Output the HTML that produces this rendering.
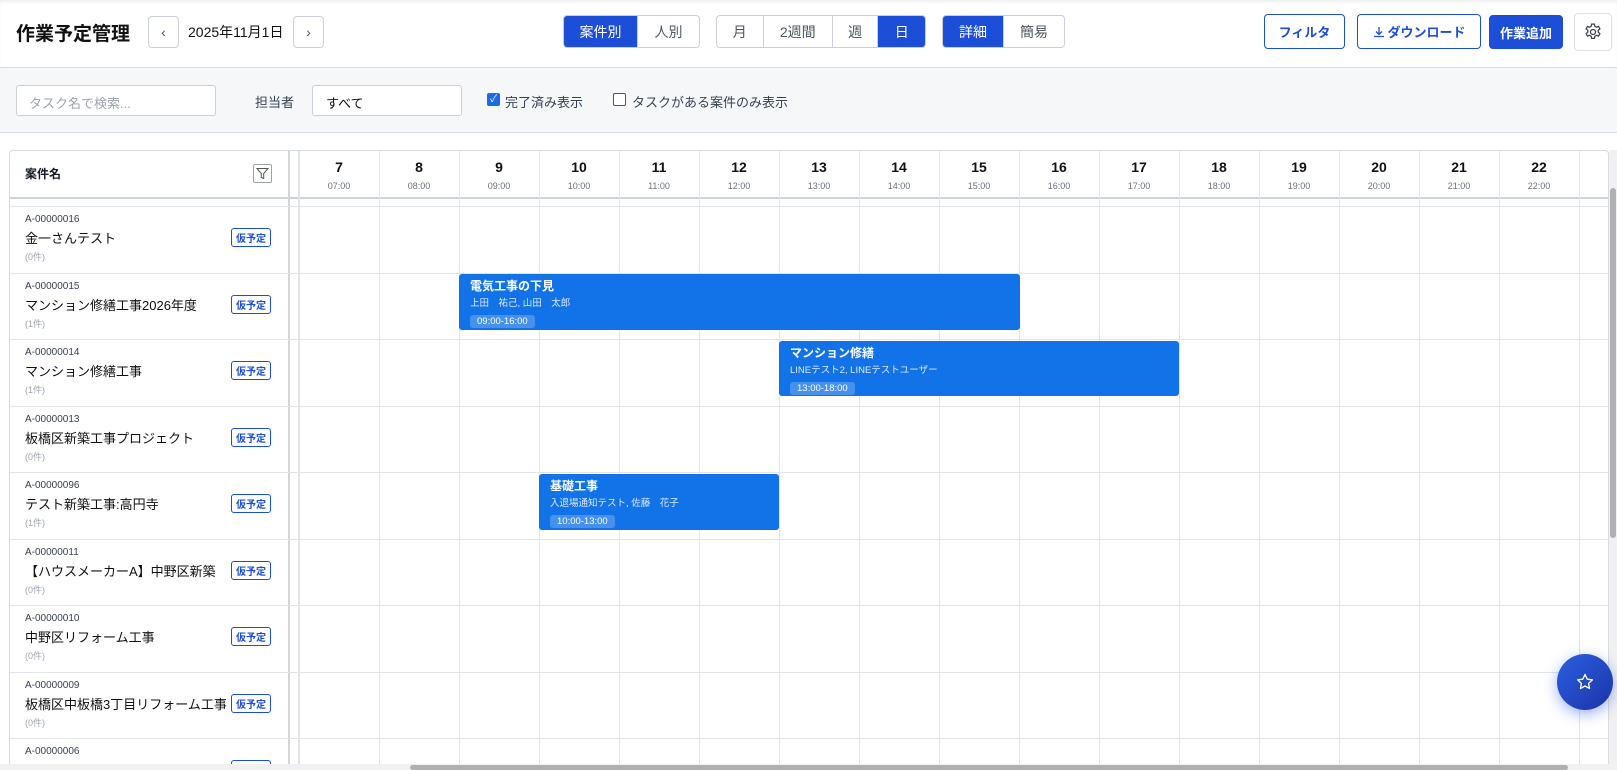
<!DOCTYPE html>
<html><head><meta charset="utf-8"><style>
*{box-sizing:border-box;margin:0;padding:0}
body{width:1617px;height:770px;overflow:hidden;background:#fff;font-family:"Liberation Sans","Noto Sans CJK JP",sans-serif;color:#111827;position:relative}
.abs{position:absolute}
.hdr{left:0;top:0;width:1617px;height:68px;border-bottom:1px solid #d7dbe2;background:#fff;box-shadow:inset 0 3px 4px -2px #e5e7eb}
.btn{position:absolute;border:1px solid #cbd0d8;border-radius:4px;background:#fff;display:flex;align-items:center;justify-content:center;font-size:14px;color:#4b5563}
.grp{position:absolute;top:15px;height:33px;border:1px solid #cbd0d8;border-radius:4px;display:flex;overflow:hidden;background:#fff}
.grp div{display:flex;align-items:center;justify-content:center;font-size:14px;color:#4b5563;border-right:1px solid #cbd0d8}
.grp div:last-child{border-right:none}
.grp .on{background:#1d4ed8;color:#fff}
.bar{left:0;top:68px;width:1617px;height:65px;background:#f6f7f9;border-bottom:1px solid #d7dbe2}
.tbl{left:9px;top:150px;width:1600px;height:620px;border:1px solid #d7dbe2;border-radius:4px 4px 0 0;overflow:hidden;background:#fff}
.vl{position:absolute;top:0;width:1px;background:#e2e4e9;height:620px}
.hl{position:absolute;left:0;height:1px;background:#e2e4e9;width:1600px}
.hc{position:absolute;top:0;width:80px;height:47px;text-align:center}
.hc b{display:block;font-size:14px;margin-top:8px;color:#111}
.hc span{display:block;font-size:9px;color:#6b7280;margin-top:6px}
.row{position:absolute;left:0;width:279px}
.row .id{position:absolute;left:15px;top:8px;font-size:10px;color:#374151}
.row .nm{position:absolute;left:15px;top:22px;font-size:13px;color:#111}
.row .ct{position:absolute;left:15px;top:44px;font-size:9px;color:#9ca3af}
.row .bd{position:absolute;left:221px;top:22px;width:40px;height:19px;border:1px solid #1d4ed8;border-radius:3px;font-size:10px;color:#1d4ed8;font-weight:bold;display:flex;align-items:center;justify-content:center}
.ev{position:absolute;background:#1273e8;border-radius:3px;color:#fff;padding:5px 11px 0;line-height:1.2}
.ev .t{font-size:12px;font-weight:bold}
.ev .p{font-size:9.5px;margin-top:5px;color:#dbe8ff}
.ev .tm{display:inline-block;font-size:9.5px;background:rgba(255,255,255,.22);border-radius:3px;padding:1px 7px;margin-top:-1px}
</style></head><body>
<div class="abs hdr"></div>
<div class="abs" style="left:16px;top:19px;font-size:19px;font-weight:bold;color:#111">作業予定管理</div>
<div class="btn" style="left:148px;top:16px;width:31px;height:32px">‹</div>
<div class="abs" style="left:188px;top:22px;font-size:14px;color:#111">2025年11月1日</div>
<div class="btn" style="left:293px;top:16px;width:31px;height:32px">›</div>
<div class="grp" style="left:563px;width:137px"><div class="on" style="width:75px">案件別</div><div style="width:62px">人別</div></div>
<div class="grp" style="left:716px;width:210px"><div style="width:47px">月</div><div style="width:70px">2週間</div><div style="width:46px">週</div><div class="on" style="width:47px">日</div></div>
<div class="grp" style="left:942px;width:123px"><div class="on" style="width:62px">詳細</div><div style="width:61px">簡易</div></div>
<div class="btn" style="left:1264px;top:14px;width:81px;height:35px;border-color:#1d4ed8;color:#1d4ed8;font-weight:bold;font-size:13px">フィルタ</div>
<div class="btn" style="left:1357px;top:14px;width:124px;height:35px;border-color:#1d4ed8;color:#1d4ed8;font-weight:bold;font-size:13px"><svg width="14" height="14" viewBox="0 0 14 14" style="margin-right:1px"><path d="M7 2v7M4 6.5l3 3 3-3M2 11.5h10" stroke="#1d4ed8" stroke-width="1.3" fill="none"/></svg>ダウンロード</div>
<div class="btn" style="left:1489px;top:15px;width:74px;height:34px;background:#1d4ed8;border-color:#1d4ed8;color:#fff;font-weight:bold;font-size:13px">作業追加</div>
<div class="btn" style="left:1574px;top:13px;width:38px;height:38px;border-color:#dde0e5"><svg width="20" height="20" viewBox="0 0 24 24" fill="none" stroke="#374151" stroke-width="1.5"><circle cx="12" cy="12" r="3"/><path d="M10.3 2.5h3.4l.5 2.6 1.9 1.1 2.5-.9 1.7 2.9-2 1.8v2.2l2 1.8-1.7 2.9-2.5-.9-1.9 1.1-.5 2.6h-3.4l-.5-2.6-1.9-1.1-2.5.9-1.7-2.9 2-1.8v-2.2l-2-1.8 1.7-2.9 2.5.9 1.9-1.1z"/></svg></div>

<div class="abs bar"></div>
<div class="abs" style="left:16px;top:85px;width:200px;height:31px;border:1px solid #cbd0d8;border-radius:3px;background:#fff;font-size:13px;color:#9ca3af;padding:7px 12px">タスク名で検索...</div>
<div class="abs" style="left:255px;top:92px;font-size:13px;color:#374151">担当者</div>
<div class="abs" style="left:312px;top:85px;width:150px;height:31px;border:1px solid #cbd0d8;border-radius:3px;background:#fff;font-size:13px;color:#111;padding:7px 13px">すべて</div>
<div class="abs" style="left:487px;top:93px;width:13px;height:13px;background:#1d6ae5;border-radius:2px;color:#fff;font-size:10px;line-height:13px;text-align:center">✓</div>
<div class="abs" style="left:505px;top:92px;font-size:13px;color:#374151">完了済み表示</div>
<div class="abs" style="left:613px;top:93px;width:13px;height:13px;border:1px solid #555;border-radius:2px;background:#fff"></div>
<div class="abs" style="left:632px;top:92px;font-size:13px;color:#374151">タスクがある案件のみ表示</div>

<div class="abs tbl">
  <div style="position:absolute;left:0;top:0;width:1600px;height:48px;border-bottom:2px solid #cfd3da"></div>
  <div class="abs" style="left:15px;top:14px;font-size:12px;font-weight:bold">案件名</div>
  <div class="abs" style="left:243px;top:13px;width:19px;height:19px;border:1px solid #9ca3af;border-radius:2px"><svg width="17" height="17" viewBox="0 0 17 17"><path d="M3 3.5h11l-4.3 5v5l-2.4-1v-4z" fill="none" stroke="#555" stroke-width="1"/></svg></div>
  <div class="vl" style="left:278px;width:2px;background:#d2d5db"></div>
  <div class="vl" style="left:288px"></div>
  <div id="cols"></div>
  <div class="hl" style="top:55px"></div>
  <div class="hl" style="top:122px"></div>
  <div class="hl" style="top:188px"></div>
  <div class="hl" style="top:255px"></div>
  <div class="hl" style="top:321px"></div>
  <div class="hl" style="top:388px"></div>
  <div class="hl" style="top:454px"></div>
  <div class="hl" style="top:521px"></div>
  <div class="hl" style="top:587px"></div>
  <div class="row" style="top:55px"><div class="id">A-00000016</div><div class="nm">金一さんテスト</div><div class="ct">(0件)</div><div class="bd">仮予定</div></div>
  <div class="row" style="top:122px"><div class="id">A-00000015</div><div class="nm">マンション修繕工事2026年度</div><div class="ct">(1件)</div><div class="bd">仮予定</div></div>
  <div class="row" style="top:188px"><div class="id">A-00000014</div><div class="nm">マンション修繕工事</div><div class="ct">(1件)</div><div class="bd">仮予定</div></div>
  <div class="row" style="top:255px"><div class="id">A-00000013</div><div class="nm">板橋区新築工事プロジェクト</div><div class="ct">(0件)</div><div class="bd">仮予定</div></div>
  <div class="row" style="top:321px"><div class="id">A-00000096</div><div class="nm">テスト新築工事:高円寺</div><div class="ct">(1件)</div><div class="bd">仮予定</div></div>
  <div class="row" style="top:388px"><div class="id">A-00000011</div><div class="nm">【ハウスメーカーA】中野区新築</div><div class="ct">(0件)</div><div class="bd">仮予定</div></div>
  <div class="row" style="top:454px"><div class="id">A-00000010</div><div class="nm">中野区リフォーム工事</div><div class="ct">(0件)</div><div class="bd">仮予定</div></div>
  <div class="row" style="top:521px"><div class="id">A-00000009</div><div class="nm">板橋区中板橋3丁目リフォーム工事</div><div class="ct">(0件)</div><div class="bd">仮予定</div></div>
  <div class="row" style="top:587px"><div class="id">A-00000006</div><div class="bd">仮予定</div></div>
  <div class="ev" style="left:449px;top:123px;width:561px;height:56px"><div class="t">電気工事の下見</div><div class="p">上田　祐己, 山田　太郎</div><div class="tm">09:00-16:00</div></div>
  <div class="ev" style="left:769px;top:190px;width:400px;height:55px"><div class="t">マンション修繕</div><div class="p">LINEテスト2, LINEテストユーザー</div><div class="tm">13:00-18:00</div></div>
  <div class="ev" style="left:529px;top:323px;width:240px;height:56px"><div class="t">基礎工事</div><div class="p">入退場通知テスト, 佐藤　花子</div><div class="tm">10:00-13:00</div></div>
</div>
<div class="abs" style="left:1609px;top:150px;width:8px;height:620px;background:#f1f1f1"></div>
<div class="abs" style="left:1610px;top:188px;width:6px;height:350px;background:#b0b0b0;border-radius:3px"></div>
<div class="abs" style="left:0;top:764px;width:1617px;height:6px;background:#f1f1f1"></div>
<div class="abs" style="left:410px;top:765px;width:1158px;height:5px;background:#b0b0b0;border-radius:3px"></div>
<div class="abs" style="left:1557px;top:654px;width:56px;height:56px;border-radius:50%;background:linear-gradient(135deg,#2c5fe0,#1a34a8);box-shadow:0 4px 14px rgba(40,80,230,.45);display:flex;align-items:center;justify-content:center"><svg width="20" height="20" viewBox="0 0 24 24"><path d="M12 3l2.7 5.6 6.1.8-4.5 4.2 1.1 6.1L12 16.8 6.6 19.7l1.1-6.1-4.5-4.2 6.1-.8z" fill="none" stroke="#fff" stroke-width="1.6" stroke-linejoin="round"/></svg></div>
<script>
var c=document.getElementById('cols'),h='';
for(var i=0;i<17;i++){var x=289+i*80;h+='<div class="vl" style="left:'+x+'px"></div>';var n=7+i;h+='<div class="hc" style="left:'+x+'px"><b>'+n+'</b><span>'+(n<10?'0':'')+n+':00</span></div>';}
c.innerHTML=h;
</script>
</body></html>
